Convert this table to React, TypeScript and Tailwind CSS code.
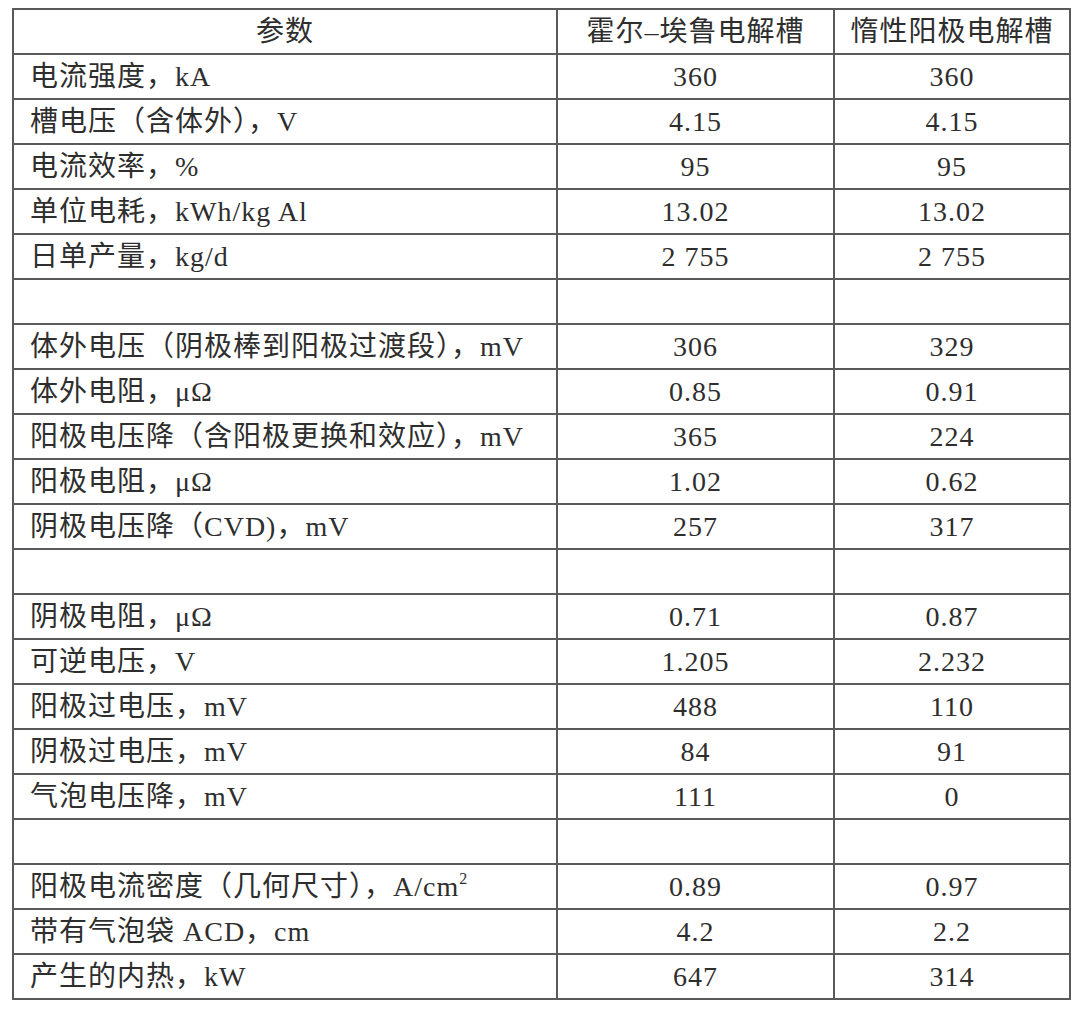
import React from 'react';

type Row = { label: React.ReactNode; a: string; b: string } | null;

const rows: Row[] = [
    { label: '电流强度，kA', a: '360', b: '360' },
    { label: '槽电压（含体外），V', a: '4.15', b: '4.15' },
    { label: '电流效率，%', a: '95', b: '95' },
    { label: '单位电耗，kWh/kg Al', a: '13.02', b: '13.02' },
    { label: '日单产量，kg/d', a: '2 755', b: '2 755' },
    null,
    { label: '体外电压（阴极棒到阳极过渡段），mV', a: '306', b: '329' },
    { label: '体外电阻，μΩ', a: '0.85', b: '0.91' },
    { label: '阳极电压降（含阳极更换和效应），mV', a: '365', b: '224' },
    { label: '阳极电阻，μΩ', a: '1.02', b: '0.62' },
    { label: '阴极电压降（CVD)，mV', a: '257', b: '317' },
    null,
    { label: '阴极电阻，μΩ', a: '0.71', b: '0.87' },
    { label: '可逆电压，V', a: '1.205', b: '2.232' },
    { label: '阳极过电压，mV', a: '488', b: '110' },
    { label: '阴极过电压，mV', a: '84', b: '91' },
    { label: '气泡电压降，mV', a: '111', b: '0' },
    null,
    {
        label: (
            <>
                阳极电流密度（几何尺寸），A/cm<span className="text-[16px] align-top relative -top-[2px]">2</span>
            </>
        ),
        a: '0.89',
        b: '0.97',
    },
    { label: '带有气泡袋 ACD，cm', a: '4.2', b: '2.2' },
    { label: '产生的内热，kW', a: '647', b: '314' },
];

const cell = 'border-2 border-[#5a5a5a] h-[45px] p-0 leading-none';

export default function App() {
    return (
        <div className="w-[1080px] h-[1009px] bg-white pt-[8px] pl-[12px] text-[#2e2e2e] text-[28px] tracking-[1px] font-['Liberation_Serif','Noto_Sans_CJK_SC',serif]">
            <table className="border-collapse table-fixed w-[1057px]">
                <colgroup>
                    <col className="w-[544px]" />
                    <col className="w-[277px]" />
                    <col className="w-[236px]" />
                </colgroup>
                <thead>
                    <tr>
                        <th className={`${cell} font-normal text-center`}>参数</th>
                        <th className={`${cell} font-normal text-center`}>霍尔–埃鲁电解槽</th>
                        <th className={`${cell} font-normal text-center`}>惰性阳极电解槽</th>
                    </tr>
                </thead>
                <tbody>
                    {rows.map((r, i) =>
                        r ? (
                            <tr key={i}>
                                <td className={`${cell} pl-[16px] whitespace-nowrap`}>{r.label}</td>
                                <td className={`${cell} text-center`}>{r.a}</td>
                                <td className={`${cell} text-center`}>{r.b}</td>
                            </tr>
                        ) : (
                            <tr key={i}>
                                <td className={cell} />
                                <td className={cell} />
                                <td className={cell} />
                            </tr>
                        )
                    )}
                </tbody>
            </table>
        </div>
    );
}
